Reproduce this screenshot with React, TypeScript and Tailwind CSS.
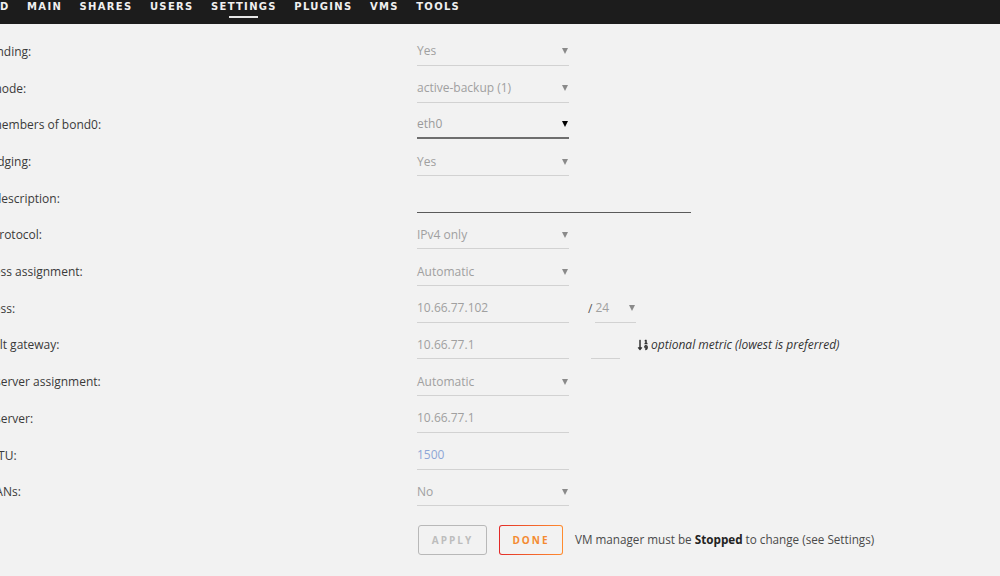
import React from "react";
import { FaSortNumericDown } from "react-icons/fa";

const navItems = ["D", "MAIN", "SHARES", "USERS", "SETTINGS", "PLUGINS", "VMS", "TOOLS"];

const Arrow: React.FC<{ dark?: boolean }> = ({ dark }) => (
  <span
    className={`w-0 h-0 border-l-[3.5px] border-r-[3.5px] border-t-[6px] border-l-transparent border-r-transparent ${
      dark ? "border-t-black" : "border-t-[#8a8a8a]"
    }`}
  />
);

const Select: React.FC<{ value: string; active?: boolean; width?: string }> = ({ value, active, width = "w-[152px]" }) => (
  <div
    className={`${width} h-[28px] flex items-center justify-between pr-[1px] ${
      active ? "border-b-2 border-[#6e6e6e] text-[#9a9a9a]" : "border-b border-[#d2d2d2] text-[#a0a0a0]"
    }`}
  >
    <span>{value}</span>
    <Arrow dark={active} />
  </div>
);

const Input: React.FC<{ value?: string; width?: string; color?: string; dark?: boolean }> = ({
  value = "",
  width = "w-[152px]",
  color = "text-[#a0a0a0]",
  dark,
}) => (
  <div className={`${width} h-[28px] flex items-center ${color} border-b ${dark ? "border-[#5a5a5a]" : "border-[#d2d2d2]"}`}>
    {value}
  </div>
);

const Row: React.FC<{ label: string; children: React.ReactNode }> = ({ label, children }) => (
  <div className="flex items-center h-[36.7px]">
    <div className="w-[476px] shrink-0 text-[#3a3a3a] whitespace-nowrap">{label}</div>
    <div className="flex items-center">{children}</div>
  </div>
);

export default function App() {
  return (
    <div className="min-h-[576px] bg-[#f2f2f2] overflow-hidden" style={{ fontFamily: '"Open Sans", "Noto Sans", sans-serif' }}>
      <div className="h-[24px] bg-[#1c1c1c] flex items-start gap-[17.5px] pt-[1px]">
        {navItems.map((item) => (
          <div key={item} className="flex flex-col items-center">
            <span
              className="text-[10px] font-bold tracking-[1.3px] text-[#f0f0f0] leading-[10px] mt-[1px]"
              style={{ fontFamily: '"DejaVu Sans", sans-serif' }}
            >
              {item}
            </span>
            {item === "SETTINGS" && <span className="mt-[4px] w-[29px] h-[2px] bg-[#e6e6e6]" />}
          </div>
        ))}
      </div>

      <div className="ml-[-59px] pt-[9.6px] text-[12px]">
        <Row label="Enable bonding:">
          <Select value="Yes" />
        </Row>
        <Row label="Bonding mode:">
          <Select value="active-backup (1)" />
        </Row>
        <Row label="Bonding members of bond0:">
          <Select value="eth0" active />
        </Row>
        <Row label="Enable bridging:">
          <Select value="Yes" />
        </Row>
        <Row label="Interface description:">
          <Input width="w-[274px]" dark />
        </Row>
        <Row label="Network protocol:">
          <Select value="IPv4 only" />
        </Row>
        <Row label="IPv4 address assignment:">
          <Select value="Automatic" />
        </Row>
        <Row label="IPv4 address:">
          <Input value="10.66.77.102" />
          <span className="ml-[19px] mr-[3px] text-[#555]">/</span>
          <Select value="24" width="w-[41px]" />
        </Row>
        <Row label="IPv4 default gateway:">
          <Input value="10.66.77.1" />
          <Input width="w-[29px] ml-[22px]" />
          <span className="ml-[17px] flex items-center gap-[2px] text-[#333] italic">
            <FaSortNumericDown className="text-[12px] not-italic" />
            optional metric (lowest is preferred)
          </span>
        </Row>
        <Row label="IPv4 DNS server assignment:">
          <Select value="Automatic" />
        </Row>
        <Row label="IPv4 DNS server:">
          <Input value="10.66.77.1" />
        </Row>
        <Row label="Desired MTU:">
          <Input value="1500" color="text-[#8ea6d6]" />
        </Row>
        <Row label="Enable VLANs:">
          <Select value="No" />
        </Row>

        <div className="flex items-center mt-[14.6px] ml-[477px]">
          <button className="w-[69px] h-[30px] border border-[#b8b8b8] rounded-[3px] text-[#bdbdbd] text-[10px] font-bold tracking-[2px]">
            APPLY
          </button>
          <button className="ml-[12px] w-[64px] h-[30px] rounded-[3px] p-[1px] bg-gradient-to-r from-[#e22828] to-[#ff8c2f]">
            <span className="flex items-center justify-center w-full h-full bg-[#f2f2f2] rounded-[2px] text-[10px] font-bold tracking-[2px] text-[#f48a30]">
              DONE
            </span>
          </button>
          <span className="ml-[12px] text-[#4a4a4a] text-[11.7px]">
            VM manager must be <b className="text-[#222]">Stopped</b> to change (see Settings)
          </span>
        </div>
      </div>
    </div>
  );
}
